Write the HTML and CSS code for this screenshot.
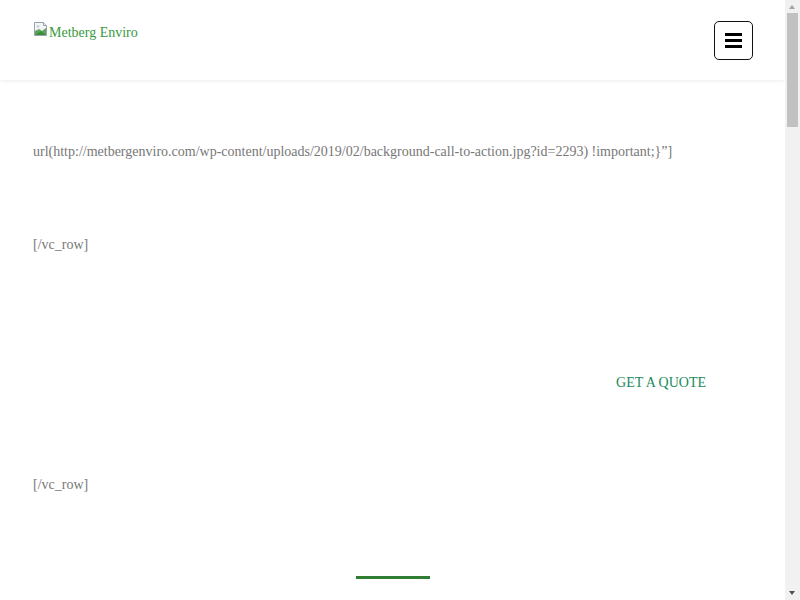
FILE: index.html
```html
<!DOCTYPE html>
<html lang="en">
<head>
    <meta charset="UTF-8">
    <meta name="viewport" content="width=device-width, initial-scale=1.0">
    <title>Metberg Enviro</title>
    <link rel="stylesheet" href="styles.css">
</head>
<body>

<!-- Site header -->
<header class="site-header">
    <a class="logo" href="#">
        <svg class="broken-img" width="16" height="16" viewBox="0 0 16 16">
            <path d="M1.5 1.5h9l3 3v10h-12z" fill="#f2f4f6" stroke="#9aa3ad"/>
            <path d="M10.5 1.5v3h3" fill="#e1e5ea" stroke="#9aa3ad"/>
            <path d="M2 10l4-2 3 2 4-3v7H2z" fill="#5aa55a"/>
            <path d="M2 14l6-4 5 4z" fill="#3c8d3c"/>
            <circle cx="5" cy="5.5" r="1.4" fill="#c9d4e0"/>
        </svg><span>Metberg Enviro</span>
    </a>
    <button class="menu-btn" aria-label="Menu">
        <span></span><span></span><span></span>
    </button>
</header>

<!-- Page content (shortcode leftovers) -->
<main class="content">
    <p class="raw first">url(http://metbergenviro.com/wp-content/uploads/2019/02/background-call-to-action.jpg?id=2293) !important;}”]</p>
    <p class="raw">[/vc_row]</p>

    <div class="cta-row">
        <a class="quote-link" href="#">GET A QUOTE</a>
    </div>

    <p class="raw">[/vc_row]</p>

    <div class="section-title">
        <span class="title-bar"></span>
        <h3>Our Clients</h3>
    </div>
</main>

<!-- window scrollbar as seen in the screenshot -->
<div class="fake-scrollbar">
    <span class="arrow up"></span>
    <span class="thumb"></span>
    <span class="arrow down"></span>
</div>

</body>
</html>
```

FILE: styles.css
```css
body {
    margin: 0;
    width: 785px;
    font-family: "Liberation Serif", "Times New Roman", serif;
    background: #fff;
    min-height: 3000px;
}

.site-header {
    height: 80px;
    display: flex;
    align-items: flex-start;
    justify-content: space-between;
    padding: 0 32px 0 33px;
    background: #fff;
    box-shadow: 0 1px 4px rgba(0, 0, 0, 0.08);
}

.logo {
    display: flex;
    align-items: flex-start;
    margin-top: 21px;
    color: #3a9a3e;
    text-decoration: none;
    font-size: 14px;
}

.logo span {
    line-height: 23px;
}

.menu-btn {
    margin-top: 21px;
    width: 39px;
    height: 39px;
    border: 1px solid #111;
    border-radius: 5px;
    background: #fff;
    padding: 0;
    display: flex;
    flex-direction: column;
    align-items: center;
    justify-content: center;
    gap: 3px;
}

.menu-btn span {
    display: block;
    width: 17px;
    height: 3px;
    background: #000;
}

.content {
    padding: 0 33px;
}

.raw {
    margin: 0;
    font-size: 14px;
    line-height: 20px;
    color: #777;
}

.raw.first {
    padding-top: 62px;
    margin-bottom: 73px;
}

.cta-row {
    display: flex;
    justify-content: flex-end;
    padding: 118px 46px 0 0;
    margin-bottom: 82px;
}

.quote-link {
    color: #1b8a5a;
    text-decoration: none;
    font-size: 14px;
    line-height: 20px;
}

.section-title {
    text-align: center;
    padding-top: 81px;
}

.title-bar {
    display: block;
    width: 74px;
    height: 3px;
    background: #2e7d32;
    margin: 0 auto;
}

.section-title h3 {
    margin: 16px 0 0;
    color: #2e7d32;
    font-size: 30px;
}

.fake-scrollbar {
    position: fixed;
    top: 0;
    right: 0;
    width: 15px;
    height: 100vh;
    background: #f1f1f1;
}

.thumb {
    position: absolute;
    top: 13px;
    left: 2px;
    width: 11px;
    height: 114px;
    background: #c1c1c1;
}

.arrow {
    position: absolute;
    left: 4px;
    width: 0;
    height: 0;
    border-left: 3.5px solid transparent;
    border-right: 3.5px solid transparent;
}

.arrow.up {
    top: 5px;
    border-bottom: 4px solid #a3a3a3;
}

.arrow.down {
    bottom: 5px;
    border-top: 4px solid #505050;
}
```
